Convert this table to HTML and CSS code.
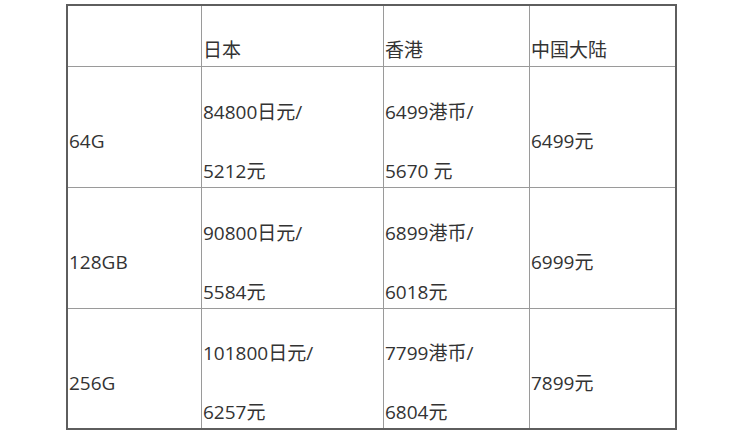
FILE: index.html
```html
<!DOCTYPE html>
<html lang="zh-CN">
<head>
<meta charset="utf-8">
<title>价格对比</title>
<link rel="stylesheet" href="styles.css">
</head>
<body>
<div class="table">
  <div class="grid">
    <div class="cell head"></div>
    <div class="cell head"><span class="line">日本</span></div>
    <div class="cell head"><span class="line">香港</span></div>
    <div class="cell head"><span class="line">中国大陆</span></div>

    <div class="cell"><span class="line">64G</span></div>
    <div class="cell"><span class="line">84800日元/</span><span class="line">5212元</span></div>
    <div class="cell"><span class="line">6499港币/</span><span class="line">5670 元</span></div>
    <div class="cell"><span class="line">6499元</span></div>

    <div class="cell"><span class="line">128GB</span></div>
    <div class="cell"><span class="line">90800日元/</span><span class="line">5584元</span></div>
    <div class="cell"><span class="line">6899港币/</span><span class="line">6018元</span></div>
    <div class="cell"><span class="line">6999元</span></div>

    <div class="cell"><span class="line">256G</span></div>
    <div class="cell"><span class="line">101800日元/</span><span class="line">6257元</span></div>
    <div class="cell"><span class="line">7799港币/</span><span class="line">6804元</span></div>
    <div class="cell"><span class="line">7899元</span></div>
  </div>
</div>
</body>
</html>
```

FILE: styles.css
```css
html, body {
  margin: 0;
  padding: 0;
  background: #ffffff;
}

body {
  font-family: "Open Sans", "Noto Sans CJK SC", sans-serif;
  font-size: 19px;
  color: #333333;
}

.table {
  width: 607px;
  margin: 4px 0 0 66px;
  border: 2px solid #5e5e5e;
}

.grid {
  display: grid;
  grid-template-columns: 133px 181px 145px 145px;
  grid-template-rows: 60px 120px 120px 119px;
  gap: 1px;
  background: #9a9a9a;
}

.cell {
  background: #ffffff;
  box-sizing: border-box;
  padding: 28px 0 0 1px;
  display: flex;
  flex-direction: column;
  justify-content: center;
  gap: 39px;
}

.line {
  display: block;
  line-height: 20px;
  white-space: nowrap;
}
```
